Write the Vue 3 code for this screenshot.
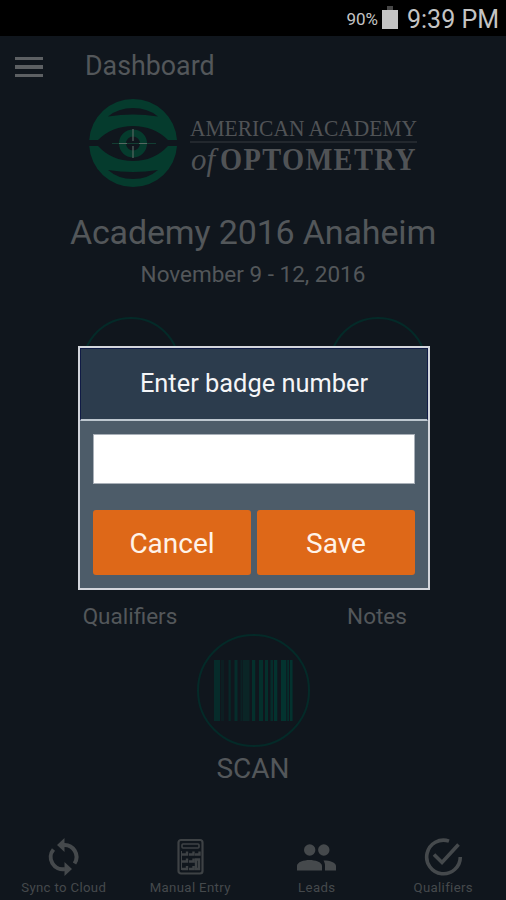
<script setup>
import { ref } from "vue";

const badge = ref("");
const showModal = ref(true);

// x, width, opacity of each bar
const bars = [
  [0, 6, 0.75], [7, 3, 0.3], [14.5, 2.2, 0.65], [20.5, 3, 0.8], [26.5, 2, 0.4],
  [29, 6.5, 0.5], [38, 3.2, 0.9], [45, 4, 0.9], [51, 3, 0.9], [56.5, 2.5, 0.8],
  [60, 3.3, 1], [67, 5.3, 1], [73.3, 1.6, 1], [76, 2.6, 1],
];

const saveBadge = () => {
  showModal.value = false;
};
</script>

<template>
  <div class="phone">
    <div class="status">
      <span class="percent">90%</span>
      <svg class="battery" width="16" height="23" viewBox="0 0 16 23">
        <path d="M5 0h6v4h-6z" fill="#484848" />
        <path d="M0 4h16v19H0z" fill="#c4c4c4" />
      </svg>
      <span class="time">9:39 PM</span>
    </div>

    <header class="header">
      <div class="burger"><i></i><i></i><i></i></div>
      <span class="page-name">Dashboard</span>
    </header>

    <main class="content">
      <svg class="logo" width="340" height="92" viewBox="0 0 340 92">
        <g fill="#053b2d">
          <path d="M1.200 42A44 44 0 0 1 89 42H80Q66 28 45 28Q24 28 10 42ZM20 18.500Q45 14.500 70 18.500Q60 10 45 10Q30 10 20 18.500Z" fill-rule="evenodd" />
          <path d="M1.200 48A44 44 0 0 0 89 48H80Q66 63 45 63Q24 63 10 48ZM20 72Q45 76 70 72Q60 81 45 81Q30 81 20 72Z" fill-rule="evenodd" />
        </g>
        <circle cx="45" cy="45.500" r="10.500" fill="none" stroke="#053b2d" stroke-width="7" />
        <path d="M24 45.500h44" stroke="#123d32" stroke-width="1" />
        <path d="M45 31v12M45 48v12M31 45.500h8M51 45.500h8" stroke="#566761" stroke-width="1.200" />
        <g fill="#505356">
          <text class="serif" x="102" y="37.500" font-size="24" textLength="227" lengthAdjust="spacingAndGlyphs">AMERICAN ACADEMY</text>
          <rect x="102" y="43.500" width="227" height="1" opacity="0.6" />
          <text class="serif" x="103" y="72" font-size="32" font-style="italic" textLength="24" lengthAdjust="spacingAndGlyphs">of</text>
          <text class="serif optometry" x="132" y="72" font-size="32" font-weight="bold" textLength="197" lengthAdjust="spacingAndGlyphs">OPTOMETRY</text>
        </g>
      </svg>

      <h1 class="title">Academy 2016 Anaheim</h1>
      <p class="date">November 9 - 12, 2016</p>

      <div class="tiles">
        <div class="tile">
          <div class="ring"></div>
          <span>Qualifiers</span>
        </div>
        <div class="tile">
          <div class="ring"></div>
          <span>Notes</span>
        </div>
      </div>

      <div class="scan">
        <div class="ring">
          <svg width="80" height="61" viewBox="0 0 80 61">
            <rect v-for="bar in bars" :x="bar[0]" y="0" :width="bar[1]" height="61" fill="#03332f" :opacity="bar[2]" />
          </svg>
        </div>
        <span>SCAN</span>
      </div>
    </main>

    <nav class="tabs">
      <div class="tab">
        <svg width="40" height="40" viewBox="0 0 40 40" fill="none" stroke="#45494c" stroke-width="4">
          <path d="M20 9A12 12 0 0 1 31.500 27.500" />
          <path d="M10.500 13.500A12 12 0 0 0 22 33" />
          <path d="M21.500 2v14l-7.500-7zM21.500 26v14l7.500-7z" fill="#45494c" stroke="none" />
        </svg>
        <span>Sync to Cloud</span>
      </div>
      <div class="tab">
        <svg width="40" height="40" viewBox="0 0 40 40" fill="none" stroke="#3e4245">
          <rect x="8.500" y="4" width="24" height="33.500" rx="2.500" stroke-width="2.200" />
          <rect x="12" y="8" width="17" height="4" rx="1" stroke-width="1.600" />
          <path d="M12 18.500h5v-3M19 18.500h4.500v-3M25 18.500h4.500v-3M12 25.500h5v-3M19 25.500h4.500v-3M12 33h5v-3M19 33h4.500v-3M26 23.500h3v9.500h-3z" stroke-width="2.400" />
          <path d="M11.500 15v19" stroke-width="1" />
        </svg>
        <span>Manual Entry</span>
      </div>
      <div class="tab">
        <svg width="40" height="40" viewBox="0 0 40 40" fill="#45494c">
          <circle cx="13.700" cy="14" r="5.700" />
          <circle cx="27.800" cy="14" r="5.700" />
          <path d="M1 34.500v-4.500c0-4 7-6 12.500-6s12.500 2 12.500 6v4.500zM27.500 24.500c6.500 0 12.500 2 12.500 5.500v4.500H29v-4.500c0-2.500-.5-4-1.500-5.500z" />
        </svg>
        <span>Leads</span>
      </div>
      <div class="tab">
        <svg width="40" height="40" viewBox="0 0 40 40" fill="none" stroke="#45494c" stroke-width="3.600">
          <path d="M26 5.100A16.800 16.800 0 1 0 37.300 21" />
          <path d="M11 18.500L19 26.500L35.500 8.500" />
        </svg>
        <span>Qualifiers</span>
      </div>
    </nav>

    <div v-if="showModal" class="modal">
      <div class="modal-title">Enter badge number</div>
      <div class="modal-body">
        <input v-model="badge" />
        <div class="buttons">
          <button @click="showModal = false">Cancel</button>
          <button @click="saveBadge">Save</button>
        </div>
      </div>
    </div>
  </div>
</template>

<style>
body {
  background: #10161d;
}
</style>

<style scoped>
.phone {
  position: relative;
  display: flex;
  flex-direction: column;
  width: 506px;
  height: 900px;
  overflow: hidden;
  background: #10161d;
  color: #53575a;
  font-family: Roboto, sans-serif;
}
.status {
  display: flex;
  justify-content: flex-end;
  height: 36px;
  box-sizing: border-box;
  padding-right: 7px;
  background: #000;
  color: #c4c4c4;
  line-height: 39px;
}
.percent {
  font-size: 17px;
}
.battery {
  margin: 6px 9px 0 4px;
}
.time {
  font-size: 25px;
}
.header {
  display: flex;
  align-items: center;
  height: 60px;
}
.burger {
  display: flex;
  flex-direction: column;
  gap: 5px;
  width: 28px;
  margin: 2px 42px 0 15px;
}
.burger i {
  height: 3.500px;
  background: #5d6063;
}
.page-name {
  font-size: 26.800px;
}
.content {
  display: flex;
  flex-direction: column;
  align-items: center;
  height: 735px;
}
.logo {
  margin: 2px 0 0 10px;
  overflow: visible;
}
.serif {
  font-family: "Liberation Serif", serif;
}
.optometry {
  letter-spacing: 1.500px;
}
.title {
  margin: 21px 0 0;
  font-size: 34px;
  font-weight: 400;
  letter-spacing: -0.150px;
  line-height: 42px;
  white-space: nowrap;
}
.date {
  margin: 7px 0 0;
  font-size: 22.500px;
  line-height: 28px;
  white-space: nowrap;
}
.tiles {
  display: flex;
  gap: 149px;
  margin: 29px 0 0 3px;
}
.ring {
  display: flex;
  align-items: center;
  justify-content: center;
  width: 98px;
  height: 98px;
  box-sizing: border-box;
  border: 2px solid #042a28;
  border-radius: 50%;
}
.tile {
  display: flex;
  flex-direction: column;
  align-items: center;
  justify-content: space-between;
  width: 98px;
  height: 313px;
  font-size: 22.500px;
  line-height: 28px;
}
.tile span {
  margin-right: 2px;
}
.scan {
  display: flex;
  flex-direction: column;
  align-items: center;
  margin-top: 4px;
  font-size: 28px;
  line-height: 34px;
}
.scan .ring {
  width: 113px;
  height: 113px;
  padding-left: 2px;
}
.scan span {
  margin-top: 5px;
}
.tabs {
  display: flex;
  height: 69px;
}
.tab {
  display: flex;
  flex-direction: column;
  align-items: center;
  width: 126.500px;
  padding-top: 5px;
  color: #45494c;
  font-size: 13.200px;
  line-height: 20px;
}
.tab span {
  margin: 2px 0 0 1px;
  letter-spacing: 0.350px;
}
/* dialog over the dimmed dashboard */
.modal {
  position: absolute;
  left: 78px;
  top: 346px;
  width: 352px;
  height: 244px;
  box-sizing: border-box;
  border: 2px solid #d3d6dc;
  background: #4d5c69;
}
.modal-title {
  height: 73px;
  box-sizing: border-box;
  border: 1px solid #101b45;
  border-bottom: 2px solid #bdc7cf;
  background: #2c3c4d;
  color: #f4f5f7;
  font-size: 25.400px;
  line-height: 69px;
  text-align: center;
}
.modal-body {
  padding: 13px 13px 0;
}
input {
  display: block;
  width: 322px;
  height: 50px;
  box-sizing: border-box;
  border: 1px solid #a9b0b8;
  background: #fff;
  padding: 8px;
  font-size: 26px;
}
.buttons {
  display: flex;
  gap: 6px;
  margin-top: 26px;
}
button {
  flex: 1;
  height: 65px;
  padding: 2px 0 0;
  border: none;
  border-radius: 3px;
  background: #de6818;
  color: #fff3e9;
  font-family: Roboto, sans-serif;
  font-size: 28px;
}
</style>
